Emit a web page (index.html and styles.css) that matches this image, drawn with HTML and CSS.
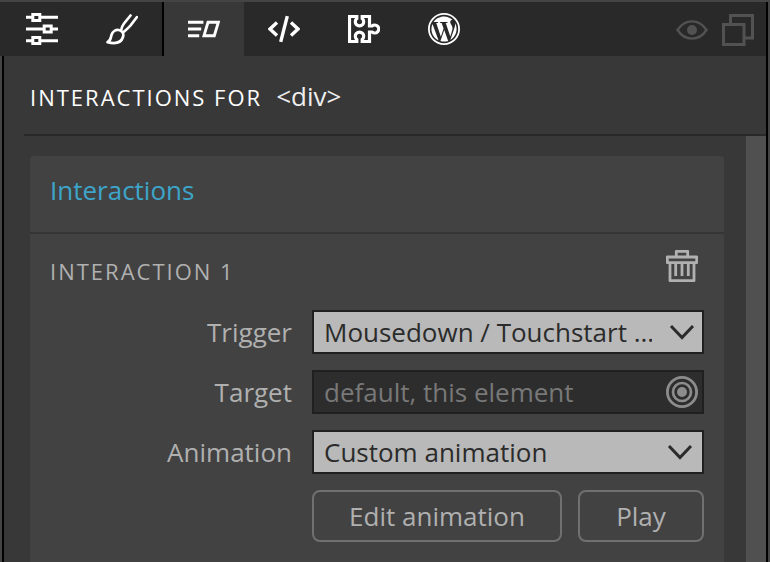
FILE: index.html
```html
<!DOCTYPE html>
<html lang="en">
<head>
<meta charset="utf-8">
<title>Interactions</title>
<link rel="stylesheet" href="styles.css">
</head>
<body>
<div class="app">
  <header class="toolbar">
    <nav class="tabs" aria-label="Panels">
      <button class="tab" type="button" aria-label="Settings">
        <svg class="icon" viewBox="0 0 32 32"><path d="M0 4.300h6M14.500 4.300H32M0 16h17.500M26 16h6M0 27.700h6M14.500 27.700H32" stroke-width="3"/><path d="M6.800 1.500h7v6h-7zM18.200 13h7v6h-7zM6.800 24.500h7v6h-7z" stroke-width="3"/></svg>
      </button>
      <button class="tab" type="button" aria-label="Styles">
        <svg class="icon" viewBox="0 0 32 32"><path d="M1.500 29.200C5 27.500 4.500 25 5.500 22C6.800 18 10 16.500 12.800 17C16.500 17.800 18 20.500 17 24C15.200 29.800 9 31 1.500 29.200ZM24.500 2.500L18 10.500C16 13 15.500 15 15 17.500M30.800 4.200L24.500 12.500C22 15.500 20 17 17 19.500" stroke-width="2.700" stroke-linecap="round" stroke-linejoin="round"/></svg>
      </button>
      <button class="tab tab-active" type="button" aria-label="Interactions" aria-current="page">
        <svg class="icon" viewBox="0 0 32 32"><path d="M0 9.300h15.400M0 16h13.200M0 22.700h11.200M20 9.300h10.300L26.300 22.700H16z" stroke-width="2.900"/></svg>
      </button>
      <button class="tab" type="button" aria-label="Code">
        <svg class="icon" viewBox="0 0 32 32"><path d="M9 9.500L2 16l7 6.500M23 9.500l7 6.500-7 6.500M19.300 3.200L12.700 28.800" stroke-width="3.400"/></svg>
      </button>
      <button class="tab" type="button" aria-label="Plugins">
        <svg class="icon" viewBox="0 0 32 32"><path d="M1.500 3.500H8.800V5.500a4.200 4.200 0 1 0 5.400 0V3.500h7.300V13H24a4 4 0 1 1 0 6h-2.500v9.500H14.200V26.500a4.200 4.200 0 1 0-5.400 0v2H1.500z" stroke-width="3.200"/></svg>
      </button>
      <button class="tab" type="button" aria-label="WordPress">
        <svg class="icon" viewBox="0 0 32 32"><circle cx="16" cy="16" r="15.100" stroke-width="1.800"/><path class="solid" transform="translate(2 2) scale(1.167)" d="M21.469 6.825c.84 1.537 1.318 3.3 1.318 5.175 0 3.979-2.156 7.456-5.363 9.325l3.295-9.527c.615-1.54.82-2.771.82-3.864 0-.405-.026-.78-.07-1.11m-7.981.105c.647-.03 1.232-.105 1.232-.105.582-.075.514-.93-.067-.899 0 0-1.755.135-2.880.135-1.064 0-2.850-.150-2.850-.150-.585-.03-.661.855-.075.885 0 0 .54.061 1.125.09l1.680 4.605-2.370 7.080L5.354 6.900c.649-.03 1.234-.1 1.234-.1.585-.075.516-.93-.065-.896 0 0-1.746.138-2.874.138-.2 0-.438-.008-.69-.015C4.911 3.150 8.235 1.215 12 1.215c2.809 0 5.365 1.072 7.286 2.833-.046-.003-.091-.009-.141-.009-1.060 0-1.812.923-1.812 1.914 0 .89.513 1.643 1.060 2.531.411.72.89 1.643.89 2.977 0 .915-.354 1.994-.821 3.479l-1.075 3.585-3.900-11.610zM12 22.784c-1.059 0-2.081-.153-3.048-.437l3.237-9.406 3.315 9.087c.024.053.05.101.078.149-1.120.393-2.325.609-3.582.609M1.211 12c0-1.564.336-3.050.935-4.390L7.290 21.709C3.694 19.960 1.212 16.271 1.211 12"/></svg>
      </button>
    </nav>
    <div class="tools">
      <button class="tool" type="button" aria-label="Preview">
        <svg class="icon" viewBox="0 0 32 32"><path d="M1.500 16C9 4.500 23 4.500 30.500 16C23 27.500 9 27.500 1.500 16Z" stroke-width="2.400"/><circle class="solid" cx="16" cy="16" r="5"/></svg>
      </button>
      <button class="tool" type="button" aria-label="Windows">
        <svg class="icon" viewBox="0 0 32 32"><path d="M8.500 9V1.500h22v22.500H23M1.500 10.500h20.500v20h-20.500z" stroke-width="3"/></svg>
      </button>
    </div>
  </header>

  <main class="panel">
    <h1 class="panel-title"><span class="caps">Interactions for</span><span class="element">&lt;div&gt;</span></h1>
    <div class="panel-body">
      <section class="card">
        <h2 class="card-title">Interactions</h2>
        <form class="card-body">
          <div class="item-head">
            <h3 class="caps">Interaction 1</h3>
            <button class="delete" type="button" aria-label="Delete interaction">
              <svg class="icon" viewBox="0 0 32 32"><path d="M10.300 6V1.300h11.400V6M1.300 7h29.400v5.700H1.300zM4 13v17.700h24V13M9.700 14v12M16 14v12M22.300 14v12" stroke-width="2.800" stroke-linejoin="round"/></svg>
            </button>
          </div>
          <div class="row">
            <label class="label" for="trigger">Trigger</label>
            <div class="field">
              <select class="control select" id="trigger"><option>Mousedown / Touchstart ...</option></select>
              <svg class="icon mark dark" viewBox="0 0 32 32"><path d="M5 10l11 11.500L27 10" stroke-width="3"/></svg>
            </div>
          </div>
          <div class="row">
            <label class="label" for="target">Target</label>
            <div class="field">
              <input class="control input" id="target" type="text" placeholder="default, this element">
              <svg class="icon mark" viewBox="0 0 32 32"><circle cx="16" cy="16" r="14.600" stroke-width="2.800"/><circle cx="16" cy="16" r="9" stroke-width="2.700"/><circle class="solid" cx="16" cy="16" r="5"/></svg>
            </div>
          </div>
          <div class="row">
            <label class="label" for="animation">Animation</label>
            <div class="field">
              <select class="control select" id="animation"><option>Custom animation</option></select>
              <svg class="icon mark dark" viewBox="0 0 32 32"><path d="M3 10l11 11.500L25 10" stroke-width="3"/></svg>
            </div>
          </div>
          <div class="row">
            <div class="actions">
              <button class="button" type="button">Edit animation</button>
              <button class="button" type="button">Play</button>
            </div>
          </div>
        </form>
      </section>
      <div class="scrollbar"></div>
    </div>
  </main>
</div>
</body>
</html>
```
FILE: styles.css
```css
* { box-sizing: border-box; }

body {
  margin: 0;
  background: #444;
  color: #b0b0b0;
  font: 26px/36px "Open Sans", sans-serif;
}

button, select, input { margin: 0; font: inherit; }
button { padding: 0; border: 0; background: none; color: inherit; }
h1, h2, h3 { margin: 0; font: inherit; }

.app {
  display: flex;
  flex-direction: column;
  min-height: 100vh;
  padding: 2px 2px 0 0;
}

.icon {
  display: block;
  width: 32px;
  height: 32px;
  fill: none;
  stroke: currentColor;
}
.solid { fill: currentColor; stroke: none; }

.toolbar {
  display: flex;
  justify-content: space-between;
  height: 54px;
  padding-left: 2px;
  border-right: 2px solid #000;
  background: #292929;
}
.tabs { display: flex; color: #fff; }
.tab {
  display: grid;
  place-items: center;
  width: 80px;
}
.tab-active {
  width: 82px;
  border-left: 2px solid #000;
  background: #383838;
}
.tools {
  display: flex;
  align-items: center;
  gap: 14px;
  padding: 2px 12px 0 0;
  color: #525252;
}

.panel {
  display: flex;
  flex: 1;
  flex-direction: column;
  margin-left: 2px;
  border: solid #000;
  border-width: 0 2px;
  background: #383838;
}
.panel-title {
  display: flex;
  align-items: baseline;
  gap: 14px;
  height: 80px;
  margin-left: 20px;
  padding: 22px 6px;
  border-bottom: 2px solid #292929;
  color: #fff;
}
.caps {
  font-size: 22px;
  letter-spacing: 2px;
  text-transform: uppercase;
}
.element { color: #eee; }

.panel-body { display: flex; flex: 1; }
.card {
  flex: 1;
  margin: 20px 22px 0 26px;
  border-radius: 4px 4px 0 0;
  background: #424242;
}
.card-title {
  height: 78px;
  padding: 16px 20px;
  border-bottom: 2px solid #353535;
  color: #3da5ca;
}
.card-body { padding: 16px 20px 20px; }
.scrollbar { width: 20px; background: #505050; }

.item-head {
  display: flex;
  align-items: flex-start;
  justify-content: space-between;
  height: 44px;
  margin-bottom: 16px;
}
.item-head .caps { padding-top: 3px; }
.delete { padding-right: 6px; }

.row {
  display: grid;
  grid-template-columns: 242px 1fr;
  column-gap: 20px;
  align-items: center;
  margin-bottom: 16px;
}
.label { text-align: right; }
.field {
  display: grid;
  grid-template-columns: 1fr 38px;
  align-items: center;
}
.control {
  grid-area: 1 / 1 / 2 / 3;
  width: 100%;
  height: 44px;
  padding: 0 50px 0 10px;
  border: 2px solid #202020;
  border-radius: 0;
  outline: 0;
}
.select {
  appearance: none;
  background: #b9b9b9;
  color: #2b2b2b;
}
.input { background: #2d2d2d; color: #b0b0b0; }
.input::placeholder { color: #787878; opacity: 1; }
.mark {
  grid-area: 1 / 2;
  color: #8c8c8c;
  pointer-events: none;
}
.dark { color: #2b2b2b; }

.actions {
  display: grid;
  grid-column: 2;
  grid-template-columns: 1fr 126px;
  gap: 16px;
}
.button {
  height: 52px;
  border: 2px solid #707070;
  border-radius: 8px;
}
```
